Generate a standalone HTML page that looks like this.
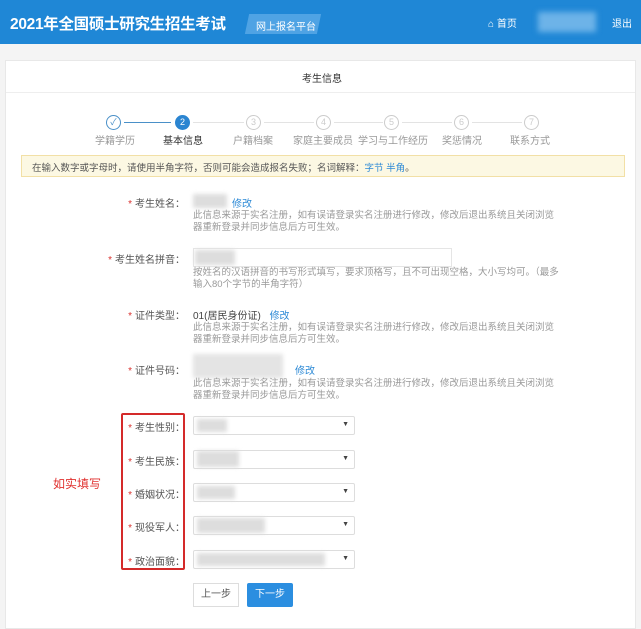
<!DOCTYPE html>
<html><head><meta charset="utf-8"><style>
*{margin:0;padding:0;box-sizing:border-box}
body{width:641px;height:629px;background:#f4f4f4;font-family:"Liberation Sans","Noto Sans CJK SC",sans-serif;font-size:10px;color:#555;position:relative;overflow:hidden}
.a{position:absolute}
.hd{left:0;top:0;width:641px;height:44px;background:#1f87d6}
.panel{left:5px;top:60px;width:631px;height:569px;background:#fff;border:1px solid #e8e8e8}
.lab{position:absolute;right:456px;font-size:10px;color:#555;white-space:nowrap}
.lab i{color:#d9322f;font-style:normal;margin-right:3px}
.desc{position:absolute;left:193px;width:370px;color:#999;font-size:9.5px;line-height:12px}
.lk{color:#2d8ad6}
.blur{position:absolute;background:#ddd;filter:blur(2px)}
.sel{position:absolute;left:193px;width:162px;height:19px;border:1px solid #ddd;background:#fff;border-radius:2px}
.sel:after{content:"▼";position:absolute;right:5px;top:4px;font-size:7px;color:#444}
.step{position:absolute;top:115px;width:15px;height:15px;border-radius:50%;border:1px solid #ccc;color:#ccc;font-size:9px;text-align:center;line-height:13px}
.sl{position:absolute;top:132px;font-size:10px;color:#999;white-space:nowrap}
.ln{position:absolute;top:122px;height:1px;background:#e3e3e3}
</style></head><body>
<div class="a hd"></div>
<div class="a" style="left:10px;top:12px;font-size:15.5px;font-weight:bold;color:#fff;letter-spacing:-0.3px">2021年全国硕士研究生招生考试</div>
<div class="a" style="left:247px;top:14px;width:72px;height:20px;background:#4fa3e4;transform:skewX(-12deg)"></div>
<div class="a" style="left:256px;top:18px;font-size:10px;color:#fff">网上报名平台</div>
<div class="a" style="left:488px;top:15px;font-size:10px;color:#fff">⌂ 首页</div>
<div class="a" style="left:538px;top:12px;width:58px;height:20px;background:#6db3e8;filter:blur(3px)"></div>
<div class="a" style="left:612px;top:15px;font-size:10px;color:#fff">退出</div>
<div class="a panel"></div>
<div class="a" style="left:6px;top:92px;width:629px;height:1px;background:#eee"></div>
<div class="a" style="left:302px;top:70px;font-size:10px;color:#333">考生信息</div>

<div class="step" style="left:106px;border-color:#4a90c8;color:#4a90c8">✓</div>
<div class="ln" style="left:124px;width:47px;background:#4a90c8"></div>
<div class="step" style="left:175px;background:#2b85d1;border-color:#2b85d1;color:#fff">2</div>
<div class="ln" style="left:193px;width:51px"></div>
<div class="step" style="left:246px">3</div>
<div class="ln" style="left:264px;width:50px"></div>
<div class="step" style="left:316px">4</div>
<div class="ln" style="left:334px;width:49px"></div>
<div class="step" style="left:384px">5</div>
<div class="ln" style="left:402px;width:50px"></div>
<div class="step" style="left:454px">6</div>
<div class="ln" style="left:472px;width:50px"></div>
<div class="step" style="left:524px">7</div>
<div class="sl" style="left:95px">学籍学历</div>
<div class="sl" style="left:163px;color:#333">基本信息</div>
<div class="sl" style="left:233px">户籍档案</div>
<div class="sl" style="left:293px">家庭主要成员</div>
<div class="sl" style="left:358px">学习与工作经历</div>
<div class="sl" style="left:442px">奖惩情况</div>
<div class="sl" style="left:510px">联系方式</div>

<div class="a" style="left:21px;top:155px;width:604px;height:22px;background:#fcf8e3;border:1px solid #f2e0a6"></div>
<div class="a" style="left:32px;top:160px;font-size:9.5px;color:#555">在输入数字或字母时，请使用半角字符，否则可能会造成报名失败；名词解释：<span class="lk">字节 半角</span>。</div>

<div class="lab" style="top:195px"><i>*</i>考生姓名：</div>
<div class="blur" style="left:193px;top:194px;width:34px;height:14px"></div>
<div class="a lk" style="left:232px;top:195px">修改</div>
<div class="desc" style="top:210px">此信息来源于实名注册，如有误请登录实名注册进行修改，修改后退出系统且关闭浏览器重新登录并同步信息后方可生效。</div>

<div class="lab" style="top:251px"><i>*</i>考生姓名拼音：</div>
<div class="a" style="left:193px;top:248px;width:259px;height:19px;border:1px solid #e5e5e5"></div>
<div class="blur" style="left:195px;top:250px;width:40px;height:15px"></div>
<div class="desc" style="top:267px">按姓名的汉语拼音的书写形式填写，要求顶格写，且不可出现空格，大小写均可。（最多输入80个字节的半角字符）</div>

<div class="lab" style="top:307px"><i>*</i>证件类型：</div>
<div class="a" style="left:193px;top:307px;color:#444">01(居民身份证) <span class="lk" style="margin-left:6px">修改</span></div>
<div class="desc" style="top:322px">此信息来源于实名注册，如有误请登录实名注册进行修改，修改后退出系统且关闭浏览器重新登录并同步信息后方可生效。</div>

<div class="lab" style="top:362px"><i>*</i>证件号码：</div>
<div class="blur" style="left:193px;top:354px;width:90px;height:24px;background:#e4e4e4"></div>
<div class="a lk" style="left:295px;top:362px">修改</div>
<div class="desc" style="top:378px">此信息来源于实名注册，如有误请登录实名注册进行修改，修改后退出系统且关闭浏览器重新登录并同步信息后方可生效。</div>

<div class="a" style="left:121px;top:413px;width:64px;height:157px;border:2px solid #d42a2a;border-radius:2px"></div>
<div class="a" style="left:53px;top:475px;font-size:12px;color:#e0312f">如实填写</div>

<div class="lab" style="top:419px"><i>*</i>考生性别：</div>
<div class="sel" style="top:416px"></div><div class="blur" style="left:197px;top:419px;width:30px;height:13px"></div>
<div class="lab" style="top:453px"><i>*</i>考生民族：</div>
<div class="sel" style="top:450px"></div><div class="blur" style="left:197px;top:451px;width:42px;height:16px"></div>
<div class="lab" style="top:486px"><i>*</i>婚姻状况：</div>
<div class="sel" style="top:483px"></div><div class="blur" style="left:197px;top:486px;width:38px;height:13px"></div>
<div class="lab" style="top:519px"><i>*</i>现役军人：</div>
<div class="sel" style="top:516px"></div><div class="blur" style="left:197px;top:518px;width:68px;height:15px"></div>
<div class="lab" style="top:553px"><i>*</i>政治面貌：</div>
<div class="sel" style="top:550px"></div><div class="blur" style="left:197px;top:553px;width:128px;height:13px"></div>

<div class="a" style="left:193px;top:583px;width:46px;height:24px;border:1px solid #ddd;background:#fff;color:#555;text-align:center;line-height:22px">上一步</div>
<div class="a" style="left:247px;top:583px;width:46px;height:24px;background:#2b8ee0;color:#fff;text-align:center;line-height:24px;border-radius:2px">下一步</div>
</body></html>
